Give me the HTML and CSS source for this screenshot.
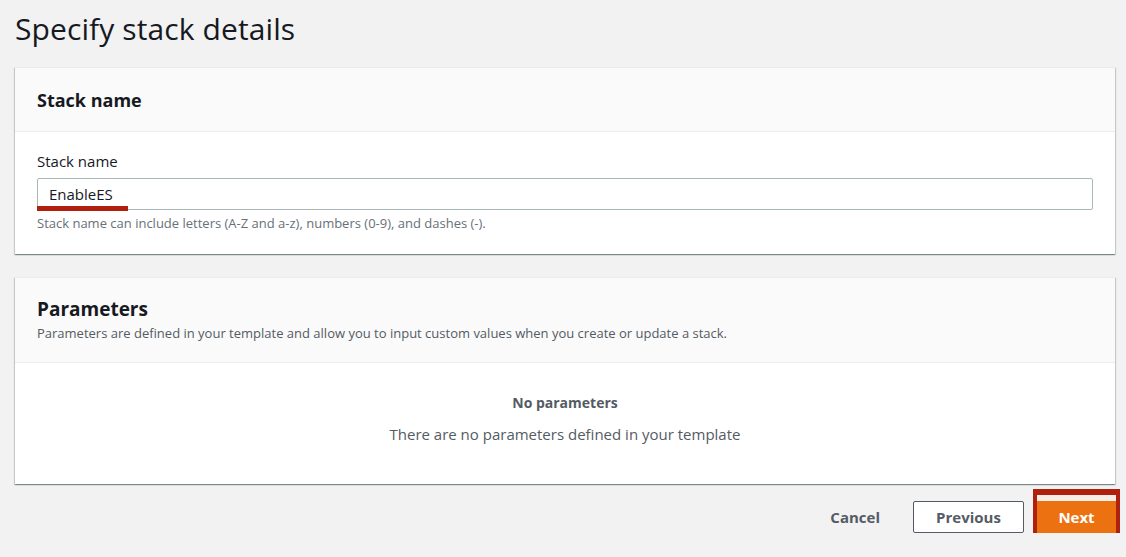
FILE: index.html
```html
<!DOCTYPE html>
<html lang="en">
<head>
    <meta charset="UTF-8">
    <title>Specify stack details</title>
    <link rel="stylesheet" href="styles.css">
</head>
<body>
    <div class="page">
        <h1>Specify stack details</h1>

        <div class="card">
            <div class="card-header">
                <h2>Stack name</h2>
            </div>
            <div class="card-body form">
                <label class="label" for="stack-name">Stack name</label>
                <div class="input-wrap">
                    <input class="input" id="stack-name" type="text" value="EnableES">
                    <span class="mark-underline"></span>
                </div>
                <div class="hint">Stack name can include letters (A-Z and a-z), numbers (0-9), and dashes (-).</div>
            </div>
        </div>

        <div class="card">
            <div class="card-header tall">
                <h2 class="big">Parameters</h2>
                <div class="desc">Parameters are defined in your template and allow you to input custom values when you create or update a stack.</div>
            </div>
            <div class="card-body empty">
                <div class="empty-title">No parameters</div>
                <div class="empty-text">There are no parameters defined in your template</div>
            </div>
        </div>

        <div class="actions">
            <button class="btn link">Cancel</button>
            <button class="btn normal">Previous</button>
            <div class="next-wrap">
                <button class="btn primary">Next</button>
            </div>
        </div>
    </div>
</body>
</html>
```

FILE: styles.css
```css
body {
    margin: 0;
    background-color: #f2f2f2;
    font-family: "Open Sans", "Noto Sans", Arial, sans-serif;
    color: #16191f;
}
.page {
    width: 1100px;
    margin-left: 15px;
}
h1 {
    font-size: 30px;
    font-weight: 400;
    margin: 0;
    padding-top: 7px;
    height: 60px;
    line-height: 44px;
    letter-spacing: 0.1px;
}
.card {
    background-color: #fff;
    box-shadow: 0 1px 1px 0 rgba(0, 28, 36, 0.3), 1px 1px 1px 0 rgba(0, 28, 36, 0.15), -1px 1px 1px 0 rgba(0, 28, 36, 0.15);
    border-top: 1px solid #eaeded;
    margin-bottom: 23px;
}
.card-header {
    background-color: #fafafa;
    border-bottom: 1px solid #eaeded;
    height: 63px;
    padding: 0 22px;
    display: flex;
    flex-direction: column;
    justify-content: center;
}
.card-header.tall {
    height: 84px;
    justify-content: flex-start;
}
h2 {
    font-size: 18px;
    font-weight: 700;
    margin: 0;
    line-height: 24px;
}
h2.big {
    font-size: 19px;
    margin-top: 19px;
}
.desc {
    font-size: 13px;
    line-height: 18px;
    color: #545b64;
    margin-top: 3px;
}
.form {
    padding: 19px 22px 22px;
}
.label {
    display: block;
    font-size: 15px;
    line-height: 20px;
    margin-bottom: 7px;
}
.input-wrap {
    position: relative;
}
.input {
    display: block;
    box-sizing: border-box;
    width: 1056px;
    height: 32px;
    border: 1px solid #aab7b8;
    border-radius: 2px;
    padding: 0 11px;
    font-family: inherit;
    font-size: 15px;
    color: #16191f;
}
.mark-underline {
    position: absolute;
    left: 0;
    top: 28px;
    width: 91px;
    height: 5px;
    background-color: #b0200e;
}
.hint {
    font-size: 13px;
    color: #687078;
    margin-top: 4px;
    line-height: 18px;
}
.empty {
    height: 121px;
    text-align: center;
    color: #545b64;
    padding-top: 30px;
    box-sizing: border-box;
}
.empty-title {
    font-size: 14px;
    font-weight: 700;
    line-height: 20px;
}
.empty-text {
    font-size: 15px;
    margin-top: 10px;
    line-height: 22px;
}
.actions {
    display: flex;
    justify-content: flex-end;
    align-items: flex-end;
    margin-top: -18px;
}
.btn {
    font-family: inherit;
    font-size: 15px;
    font-weight: 700;
    height: 32px;
    border-radius: 2px;
    cursor: pointer;
}
.link {
    background: none;
    border: none;
    color: #545b64;
    padding: 0 20px;
    margin-right: 13px;
}
.normal {
    background-color: #fff;
    border: 1px solid #545b64;
    color: #545b64;
    width: 111px;
    margin-right: 9px;
}
.next-wrap {
    border: 4px solid #b0200e;
    border-top-width: 6px;
    border-bottom-width: 5px;
    padding-top: 6px;
    background-color: #f6ede6;
    margin-right: -5px;
    margin-bottom: -5px;
}
.primary {
    background-color: #ec7211;
    border: 1px solid #ec7211;
    border-radius: 0;
    color: #fff;
    width: 79px;
    display: block;
}
```
